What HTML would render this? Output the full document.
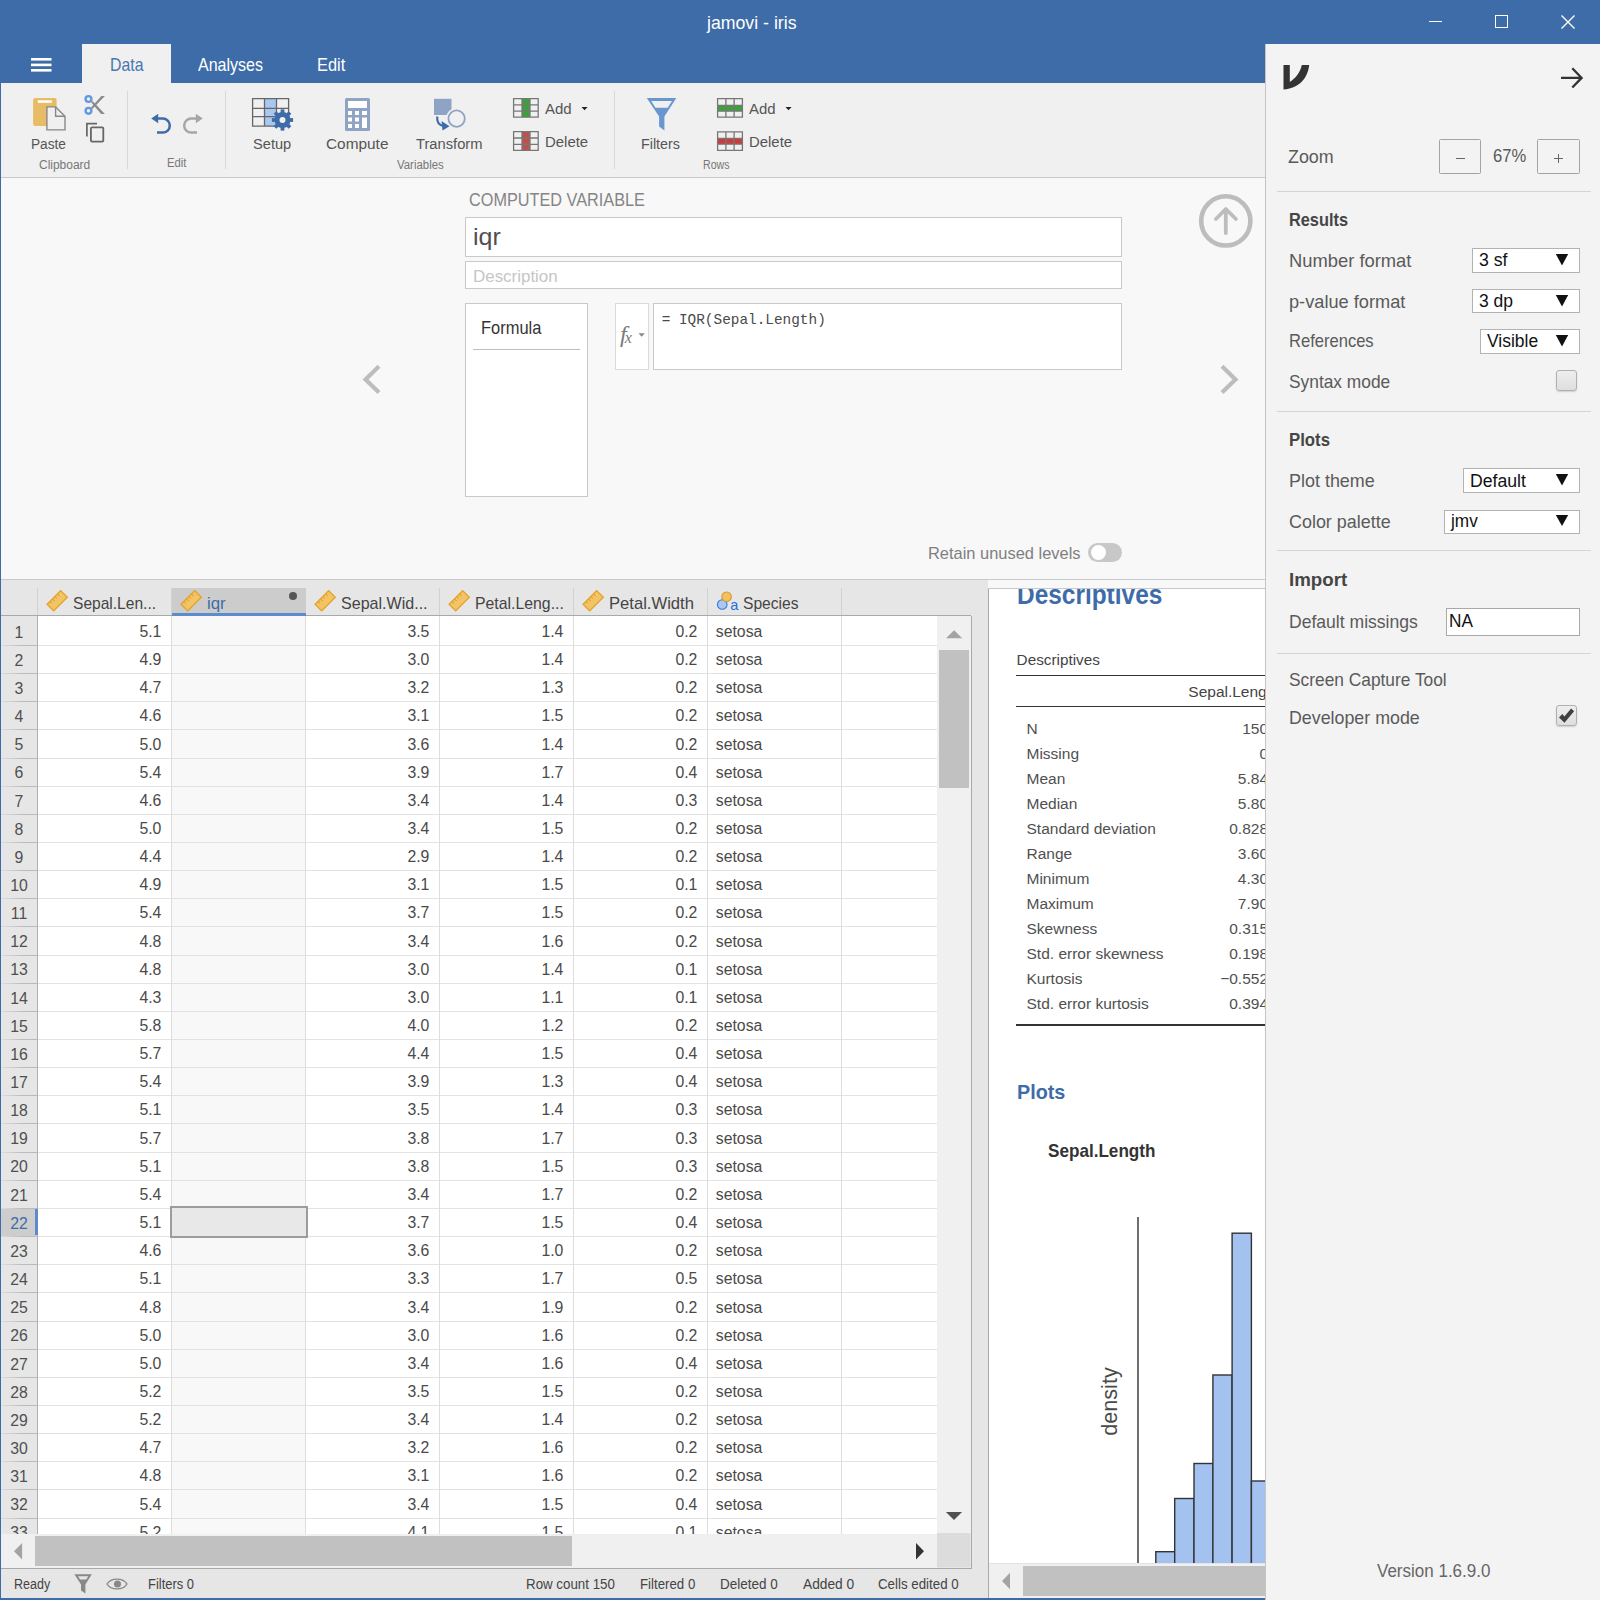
<!DOCTYPE html>
<html><head><meta charset="utf-8"><title>jamovi - iris</title>
<style>
html,body{margin:0;padding:0;width:1600px;height:1600px;overflow:hidden;background:#f8f8f8}
body{position:relative;font-family:"Liberation Sans",sans-serif}
.b{position:absolute}
.t{position:absolute;white-space:nowrap;line-height:1;font-family:"Liberation Sans",sans-serif}
svg.b{overflow:visible}
</style></head><body>
<div class="b" style="left:0px;top:0px;width:1600px;height:44px;background:#3e6ca8;"></div>
<div class="t" style="left:707.44px;top:14.02px;font-size:18.17px;color:#ffffff;font-family:'Liberation Sans', sans-serif;transform:scaleX(0.9749);transform-origin:0 0;">jamovi - iris</div>
<div class="b" style="left:1429px;top:21px;width:13px;height:1px;background:#ffffff;"></div>
<div class="b" style="left:1495px;top:15px;width:13px;height:13px;border:1.3px solid #fff;box-sizing:border-box;"></div>
<svg class="b" style="left:1560px;top:14px" width="16" height="16"><path d="M1.5 1.5L14.5 14.5M14.5 1.5L1.5 14.5" stroke="#fff" stroke-width="1.4"/></svg>
<div class="b" style="left:0px;top:44px;width:1265px;height:39px;background:#3e6ca8;"></div>
<svg class="b" style="left:31px;top:58px" width="21" height="15"><rect x="0" y="0" width="20.5" height="2.6" fill="#fff"/><rect x="0" y="5.6" width="20.5" height="2.6" fill="#fff"/><rect x="0" y="11" width="20.5" height="2.6" fill="#fff"/></svg>
<div class="b" style="left:82px;top:44px;width:89px;height:39px;background:#f0f0f0;"></div>
<div class="t" style="left:109.50px;top:55.92px;font-size:18.17px;color:#4a77b3;font-family:'Liberation Sans', sans-serif;transform:scaleX(0.8726);transform-origin:0 0;">Data</div>
<div class="t" style="left:197.50px;top:55.87px;font-size:18.17px;color:#ffffff;font-family:'Liberation Sans', sans-serif;transform:scaleX(0.8816);transform-origin:0 0;">Analyses</div>
<div class="t" style="left:316.75px;top:55.87px;font-size:18.17px;color:#ffffff;font-family:'Liberation Sans', sans-serif;transform:scaleX(0.9024);transform-origin:0 0;">Edit</div>
<div class="b" style="left:0px;top:44px;width:1px;height:1556px;background:#3e6ca8;"></div>
<div class="b" style="left:0px;top:1598px;width:1265px;height:2px;background:#3e6ca8;"></div>
<div class="b" style="left:1px;top:83px;width:1264px;height:94px;background:#f0f0f0;"></div>
<div class="b" style="left:1px;top:177px;width:1264px;height:1px;background:#c9c9c9;"></div>
<div class="b" style="left:127px;top:91px;width:1px;height:78px;background:#d8d8d8;"></div>
<div class="b" style="left:225px;top:91px;width:1px;height:78px;background:#d8d8d8;"></div>
<div class="b" style="left:614px;top:91px;width:1px;height:78px;background:#d8d8d8;"></div>
<div class="t" style="left:31.25px;top:135.98px;font-size:15.26px;color:#555;font-family:'Liberation Sans', sans-serif;transform:scaleX(0.8969);transform-origin:0 0;">Paste</div>
<div class="t" style="left:39.25px;top:159.30px;font-size:12.65px;color:#777;font-family:'Liberation Sans', sans-serif;transform:scaleX(0.9469);transform-origin:0 0;">Clipboard</div>
<div class="t" style="left:167.25px;top:157.30px;font-size:12.65px;color:#777;font-family:'Liberation Sans', sans-serif;transform:scaleX(0.8950);transform-origin:0 0;">Edit</div>
<div class="t" style="left:253.00px;top:135.98px;font-size:15.26px;color:#555;font-family:'Liberation Sans', sans-serif;transform:scaleX(0.9592);transform-origin:0 0;">Setup</div>
<div class="t" style="left:325.50px;top:135.98px;font-size:15.26px;color:#555;font-family:'Liberation Sans', sans-serif;transform:scaleX(1.0092);transform-origin:0 0;">Compute</div>
<div class="t" style="left:415.75px;top:135.98px;font-size:15.26px;color:#555;font-family:'Liberation Sans', sans-serif;transform:scaleX(0.9650);transform-origin:0 0;">Transform</div>
<div class="t" style="left:396.50px;top:159.20px;font-size:12.65px;color:#777;font-family:'Liberation Sans', sans-serif;transform:scaleX(0.9028);transform-origin:0 0;">Variables</div>
<div class="t" style="left:545.00px;top:100.98px;font-size:15.26px;color:#555;font-family:'Liberation Sans', sans-serif;transform:scaleX(0.9834);transform-origin:0 0;">Add</div>
<div class="t" style="left:545.00px;top:134.38px;font-size:15.26px;color:#555;font-family:'Liberation Sans', sans-serif;transform:scaleX(0.9791);transform-origin:0 0;">Delete</div>
<div class="t" style="left:641.30px;top:135.98px;font-size:15.26px;color:#555;font-family:'Liberation Sans', sans-serif;transform:scaleX(0.9388);transform-origin:0 0;">Filters</div>
<div class="t" style="left:703.20px;top:159.20px;font-size:12.65px;color:#777;font-family:'Liberation Sans', sans-serif;transform:scaleX(0.8411);transform-origin:0 0;">Rows</div>
<div class="t" style="left:749.40px;top:100.98px;font-size:15.26px;color:#555;font-family:'Liberation Sans', sans-serif;transform:scaleX(0.9797);transform-origin:0 0;">Add</div>
<div class="t" style="left:749.40px;top:134.38px;font-size:15.26px;color:#555;font-family:'Liberation Sans', sans-serif;transform:scaleX(0.9769);transform-origin:0 0;">Delete</div>
<svg class="b" style="left:30px;top:95px" width="40" height="40" viewBox="30 95 40 40"><rect x="33.1" y="98.1" width="23.5" height="27.8" rx="2" fill="#e8bb66"/><rect x="37.8" y="100.3" width="14.1" height="2.5" fill="#fff"/><path d="M46.9 106.9 H55.6 L65 116.3 V129.9 H46.9 Z" fill="#f0f0f0" stroke="#888" stroke-width="1.4"/><path d="M55.6 106.9 V116.3 H65" fill="none" stroke="#888" stroke-width="1.4"/></svg>
<svg class="b" style="left:82px;top:92px" width="28" height="24" viewBox="82 92 28 24"><circle cx="88.5" cy="99" r="2.9" fill="none" stroke="#6399e0" stroke-width="2.4"/><circle cx="88.5" cy="110.8" r="2.9" fill="none" stroke="#6399e0" stroke-width="2.4"/><path d="M91.1 107.4 L101.4 96 H104.9 L92.4 108.9 Z" fill="#8a8a8a"/><path d="M92.5 101.1 L104.9 113.9 H101.1 L91.3 102.5 Z" fill="#8a8a8a"/></svg>
<svg class="b" style="left:84px;top:120px" width="22" height="25" viewBox="84 120 22 25"><path d="M86.9 136.5 V123.6 H97" fill="none" stroke="#666" stroke-width="1.7"/><rect x="90.9" y="127.4" width="12.4" height="14.2" rx="1.2" fill="none" stroke="#666" stroke-width="1.8"/></svg>
<svg class="b" style="left:148px;top:110px" width="60" height="28" viewBox="148 110 60 28"><path d="M157 132.6 H162.8 A7 7 0 0 0 162.8 118.6 H156" fill="none" stroke="#3e6ca8" stroke-width="2.5"/><path d="M151.2 118.5 L158.2 113.8 V123.2 Z" fill="#3e6ca8"/><g transform="translate(354,0) scale(-1,1)"><path d="M157 132.6 H162.8 A7 7 0 0 0 162.8 118.6 H156" fill="none" stroke="#a6a6a6" stroke-width="2.5"/><path d="M151.2 118.5 L158.2 113.8 V123.2 Z" fill="#a6a6a6"/></g></svg>
<svg class="b" style="left:248px;top:94px" width="48" height="38" viewBox="248 94 48 38"><rect x="264.5" y="98.6" width="12" height="27.6" fill="#a8c8f0"/><path d="M252.6 98.6 H288.6 V126.2 H252.6 Z M264.5 98.6 V126.2 M276.5 98.6 V126.2 M252.6 108.4 H288.6 M252.6 116.6 H288.6" fill="none" stroke="#666" stroke-width="1.3"/><rect x="280.6" y="109.4" width="3.8" height="5" transform="rotate(0 282.5 120)" fill="#3e6ca8"/><rect x="280.6" y="109.4" width="3.8" height="5" transform="rotate(45 282.5 120)" fill="#3e6ca8"/><rect x="280.6" y="109.4" width="3.8" height="5" transform="rotate(90 282.5 120)" fill="#3e6ca8"/><rect x="280.6" y="109.4" width="3.8" height="5" transform="rotate(135 282.5 120)" fill="#3e6ca8"/><rect x="280.6" y="109.4" width="3.8" height="5" transform="rotate(180 282.5 120)" fill="#3e6ca8"/><rect x="280.6" y="109.4" width="3.8" height="5" transform="rotate(225 282.5 120)" fill="#3e6ca8"/><rect x="280.6" y="109.4" width="3.8" height="5" transform="rotate(270 282.5 120)" fill="#3e6ca8"/><rect x="280.6" y="109.4" width="3.8" height="5" transform="rotate(315 282.5 120)" fill="#3e6ca8"/><circle cx="282.5" cy="120" r="8" fill="#3e6ca8"/><circle cx="282.5" cy="120" r="3" fill="#f0f0f0"/></svg>
<svg class="b" style="left:343px;top:96px" width="30" height="38" viewBox="343 96 30 38"><rect x="345" y="98" width="25" height="33" rx="1.5" fill="#8fa3c4"/><rect x="348" y="101" width="19" height="7" fill="#fff"/><path d="M348 111h4v4h-4zM355 111h4v4h-4zM362 111h5v4h-5zM348 117.5h4v4h-4zM355 117.5h4v4h-4zM362 117.5h5v10.5h-5zM348 124h4v4h-4zM355 124h4v4h-4z" fill="#fff"/></svg>
<svg class="b" style="left:430px;top:96px" width="38" height="38" viewBox="430 96 38 38"><rect x="434" y="98.8" width="17.5" height="16.2" fill="#8fa3c4"/><circle cx="456.6" cy="118.6" r="10.6" fill="#f0f0f0"/><circle cx="456.6" cy="118.6" r="8.2" fill="none" stroke="#8fa3c4" stroke-width="1.8"/><path d="M437.3 116.5 C436.5 122 439 125.5 444 126" fill="none" stroke="#3e6ca8" stroke-width="2.2"/><path d="M449.5 126.2 L441.5 121 L442.5 130.5 Z" fill="#3e6ca8"/></svg>
<svg class="b" style="left:510px;top:95px" width="32" height="60" viewBox="510 95 32 60"><rect x="522" y="98.6" width="8" height="18.5" fill="#3ca03c"/><path d="M513.6 98.6H538.2V117.1H513.6ZM522 98.6V117.1M530 98.6V117.1M513.6 104.9H538.2M513.6 111.2H538.2" fill="none" stroke="#777" stroke-width="1.3"/><rect x="522" y="131.7" width="8" height="18.700000000000017" fill="#c0504d"/><path d="M513.6 131.7H538.2V150.4H513.6ZM522 131.7V150.4M530 131.7V150.4M513.6 138H538.2M513.6 144.3H538.2" fill="none" stroke="#777" stroke-width="1.3"/></svg>
<svg class="b" style="left:580px;top:105px" width="9" height="7"><path d="M1.5 2 H7.6 L4.55 5.2 Z" fill="#222"/></svg>
<svg class="b" style="left:644px;top:95px" width="36" height="38" viewBox="644 95 36 38"><path d="M646.8 98 H676.3 L664.4 116.6 V130.6 L659.1 126.5 V116.6 Z" fill="#6a96d0"/><path d="M651.2 100.9 H672 L667.7 107.7 H655.5 Z" fill="#f0f0f0"/></svg>
<svg class="b" style="left:714px;top:95px" width="32" height="60" viewBox="714 95 32 60"><rect x="717.6" y="105.4" width="24.799999999999955" height="5.699999999999989" fill="#3ca03c"/><path d="M717.6 98.6H742.4V117.2H717.6ZM725.9 98.6V117.2M734.1 98.6V117.2M717.6 105.4H742.4M717.6 111.1H742.4" fill="none" stroke="#777" stroke-width="1.3"/><rect x="717.6" y="138.4" width="24.799999999999955" height="5.699999999999989" fill="#d03a3a"/><path d="M717.6 131.8H742.4V150.4H717.6ZM725.9 131.8V150.4M734.1 131.8V150.4M717.6 138.4H742.4M717.6 144.1H742.4" fill="none" stroke="#777" stroke-width="1.3"/></svg>
<svg class="b" style="left:784px;top:105px" width="9" height="7"><path d="M1.5 2 H7.6 L4.55 5.2 Z" fill="#222"/></svg>
<div class="b" style="left:1px;top:178px;width:1264px;height:401px;background:#f8f8f8;"></div>
<div class="b" style="left:1px;top:579px;width:1264px;height:1px;background:#c8c8c8;"></div>
<div class="t" style="left:468.50px;top:190.51px;font-size:18.90px;color:#858585;font-family:'Liberation Sans', sans-serif;transform:scaleX(0.8611);transform-origin:0 0;">COMPUTED VARIABLE</div>
<div class="b" style="left:465px;top:217px;width:657px;height:40px;background:#fff;border:1px solid #c9c9c9;box-sizing:border-box;"></div>
<div class="t" style="left:472.50px;top:225.08px;font-size:24.13px;color:#505050;font-family:'Liberation Sans', sans-serif;transform:scaleX(1.0352);transform-origin:0 0;">iqr</div>
<div class="b" style="left:465px;top:261px;width:657px;height:28px;background:#fff;border:1px solid #c9c9c9;box-sizing:border-box;"></div>
<div class="t" style="left:472.50px;top:267.76px;font-size:17.30px;color:#c6c6c6;font-family:'Liberation Sans', sans-serif;transform:scaleX(0.9796);transform-origin:0 0;">Description</div>
<div class="b" style="left:465px;top:303px;width:123px;height:194px;background:#fff;border:1px solid #c9c9c9;box-sizing:border-box;"></div>
<div class="t" style="left:480.60px;top:319.61px;font-size:17.59px;color:#333;font-family:'Liberation Sans', sans-serif;transform:scaleX(0.9363);transform-origin:0 0;">Formula</div>
<div class="b" style="left:473px;top:349px;width:107px;height:1px;background:#bdbdbd;"></div>
<div class="b" style="left:615px;top:303px;width:34px;height:67px;background:#fff;border:1px solid #dadada;box-sizing:border-box;"></div>
<div class="t" style="left:620px;top:322px;font-size:24px;font-style:italic;font-family:'Liberation Serif',serif;color:#7a7a7a">f<span style="font-size:16px;position:relative;left:-2px;top:1px">x</span></div>
<svg class="b" style="left:637px;top:332px" width="9" height="6"><path d="M1.5 1.3H7.8L4.65 4.7Z" fill="#888"/></svg>
<div class="b" style="left:653px;top:303px;width:469px;height:67px;background:#fff;border:1px solid #c9c9c9;box-sizing:border-box;"></div>
<div class="t" style="left:661.70px;top:312.61px;font-size:14.40px;color:#4a4a4a;font-family:'Liberation Mono', monospace;">= IQR(Sepal.Length)</div>
<svg class="b" style="left:1195px;top:190px" width="62" height="62"><circle cx="30.8" cy="30.9" r="24.6" fill="none" stroke="#bdbdbd" stroke-width="4.6"/><path d="M30.8 43 V19.5 M20.9 29 L30.8 19 L40.9 29" fill="none" stroke="#bdbdbd" stroke-width="3.8" stroke-linecap="round" stroke-linejoin="round"/></svg>
<svg class="b" style="left:355px;top:360px" width="30" height="40"><path d="M24 6.3 L10.5 19.4 L24 32.5" fill="none" stroke="#bdbdbd" stroke-width="4.2"/></svg>
<svg class="b" style="left:1215px;top:360px" width="30" height="40"><path d="M7 6.3 L20.5 19.4 L7 32.5" fill="none" stroke="#bdbdbd" stroke-width="4.2"/></svg>
<div class="t" style="left:928.40px;top:544.80px;font-size:17.01px;color:#808080;font-family:'Liberation Sans', sans-serif;transform:scaleX(0.9665);transform-origin:0 0;">Retain unused levels</div>
<div class="b" style="left:1088px;top:543px;width:34px;height:19px;border-radius:9.5px;background:#c8c8c8"></div>
<div class="b" style="left:1090.5px;top:545px;width:15px;height:15px;border-radius:50%;background:#fff"></div>
<div class="b" style="left:1px;top:580px;width:987px;height:1018px;background:#e6e6e6;"></div>
<div class="b" style="left:0;top:0;width:1600px;height:1534px;overflow:hidden;clip-path:inset(616px 0 0 0)"><div class="b" style="left:38px;top:616px;width:899px;height:918px;background:#ffffff;"></div>
<div class="b" style="left:172px;top:616px;width:133px;height:918px;background:#f8f8f8;"></div>
<div class="b" style="left:38px;top:644.90px;width:899px;height:1px;background:#e3e3e3"></div>
<div class="b" style="left:1px;top:644.90px;width:36px;height:1px;background:linear-gradient(to right,#dedede,#bdbdbd 55%,#b9b9b9)"></div>
<div class="b" style="left:38px;top:673.05px;width:899px;height:1px;background:#e3e3e3"></div>
<div class="b" style="left:1px;top:673.05px;width:36px;height:1px;background:linear-gradient(to right,#dedede,#bdbdbd 55%,#b9b9b9)"></div>
<div class="b" style="left:38px;top:701.20px;width:899px;height:1px;background:#e3e3e3"></div>
<div class="b" style="left:1px;top:701.20px;width:36px;height:1px;background:linear-gradient(to right,#dedede,#bdbdbd 55%,#b9b9b9)"></div>
<div class="b" style="left:38px;top:729.35px;width:899px;height:1px;background:#e3e3e3"></div>
<div class="b" style="left:1px;top:729.35px;width:36px;height:1px;background:linear-gradient(to right,#dedede,#bdbdbd 55%,#b9b9b9)"></div>
<div class="b" style="left:38px;top:757.50px;width:899px;height:1px;background:#e3e3e3"></div>
<div class="b" style="left:1px;top:757.50px;width:36px;height:1px;background:linear-gradient(to right,#dedede,#bdbdbd 55%,#b9b9b9)"></div>
<div class="b" style="left:38px;top:785.65px;width:899px;height:1px;background:#e3e3e3"></div>
<div class="b" style="left:1px;top:785.65px;width:36px;height:1px;background:linear-gradient(to right,#dedede,#bdbdbd 55%,#b9b9b9)"></div>
<div class="b" style="left:38px;top:813.80px;width:899px;height:1px;background:#e3e3e3"></div>
<div class="b" style="left:1px;top:813.80px;width:36px;height:1px;background:linear-gradient(to right,#dedede,#bdbdbd 55%,#b9b9b9)"></div>
<div class="b" style="left:38px;top:841.95px;width:899px;height:1px;background:#e3e3e3"></div>
<div class="b" style="left:1px;top:841.95px;width:36px;height:1px;background:linear-gradient(to right,#dedede,#bdbdbd 55%,#b9b9b9)"></div>
<div class="b" style="left:38px;top:870.10px;width:899px;height:1px;background:#e3e3e3"></div>
<div class="b" style="left:1px;top:870.10px;width:36px;height:1px;background:linear-gradient(to right,#dedede,#bdbdbd 55%,#b9b9b9)"></div>
<div class="b" style="left:38px;top:898.25px;width:899px;height:1px;background:#e3e3e3"></div>
<div class="b" style="left:1px;top:898.25px;width:36px;height:1px;background:linear-gradient(to right,#dedede,#bdbdbd 55%,#b9b9b9)"></div>
<div class="b" style="left:38px;top:926.40px;width:899px;height:1px;background:#e3e3e3"></div>
<div class="b" style="left:1px;top:926.40px;width:36px;height:1px;background:linear-gradient(to right,#dedede,#bdbdbd 55%,#b9b9b9)"></div>
<div class="b" style="left:38px;top:954.55px;width:899px;height:1px;background:#e3e3e3"></div>
<div class="b" style="left:1px;top:954.55px;width:36px;height:1px;background:linear-gradient(to right,#dedede,#bdbdbd 55%,#b9b9b9)"></div>
<div class="b" style="left:38px;top:982.70px;width:899px;height:1px;background:#e3e3e3"></div>
<div class="b" style="left:1px;top:982.70px;width:36px;height:1px;background:linear-gradient(to right,#dedede,#bdbdbd 55%,#b9b9b9)"></div>
<div class="b" style="left:38px;top:1010.85px;width:899px;height:1px;background:#e3e3e3"></div>
<div class="b" style="left:1px;top:1010.85px;width:36px;height:1px;background:linear-gradient(to right,#dedede,#bdbdbd 55%,#b9b9b9)"></div>
<div class="b" style="left:38px;top:1039.00px;width:899px;height:1px;background:#e3e3e3"></div>
<div class="b" style="left:1px;top:1039.00px;width:36px;height:1px;background:linear-gradient(to right,#dedede,#bdbdbd 55%,#b9b9b9)"></div>
<div class="b" style="left:38px;top:1067.15px;width:899px;height:1px;background:#e3e3e3"></div>
<div class="b" style="left:1px;top:1067.15px;width:36px;height:1px;background:linear-gradient(to right,#dedede,#bdbdbd 55%,#b9b9b9)"></div>
<div class="b" style="left:38px;top:1095.30px;width:899px;height:1px;background:#e3e3e3"></div>
<div class="b" style="left:1px;top:1095.30px;width:36px;height:1px;background:linear-gradient(to right,#dedede,#bdbdbd 55%,#b9b9b9)"></div>
<div class="b" style="left:38px;top:1123.45px;width:899px;height:1px;background:#e3e3e3"></div>
<div class="b" style="left:1px;top:1123.45px;width:36px;height:1px;background:linear-gradient(to right,#dedede,#bdbdbd 55%,#b9b9b9)"></div>
<div class="b" style="left:38px;top:1151.60px;width:899px;height:1px;background:#e3e3e3"></div>
<div class="b" style="left:1px;top:1151.60px;width:36px;height:1px;background:linear-gradient(to right,#dedede,#bdbdbd 55%,#b9b9b9)"></div>
<div class="b" style="left:38px;top:1179.75px;width:899px;height:1px;background:#e3e3e3"></div>
<div class="b" style="left:1px;top:1179.75px;width:36px;height:1px;background:linear-gradient(to right,#dedede,#bdbdbd 55%,#b9b9b9)"></div>
<div class="b" style="left:38px;top:1207.90px;width:899px;height:1px;background:#e3e3e3"></div>
<div class="b" style="left:1px;top:1207.90px;width:36px;height:1px;background:linear-gradient(to right,#dedede,#bdbdbd 55%,#b9b9b9)"></div>
<div class="b" style="left:38px;top:1236.05px;width:899px;height:1px;background:#e3e3e3"></div>
<div class="b" style="left:1px;top:1236.05px;width:36px;height:1px;background:linear-gradient(to right,#dedede,#bdbdbd 55%,#b9b9b9)"></div>
<div class="b" style="left:38px;top:1264.20px;width:899px;height:1px;background:#e3e3e3"></div>
<div class="b" style="left:1px;top:1264.20px;width:36px;height:1px;background:linear-gradient(to right,#dedede,#bdbdbd 55%,#b9b9b9)"></div>
<div class="b" style="left:38px;top:1292.35px;width:899px;height:1px;background:#e3e3e3"></div>
<div class="b" style="left:1px;top:1292.35px;width:36px;height:1px;background:linear-gradient(to right,#dedede,#bdbdbd 55%,#b9b9b9)"></div>
<div class="b" style="left:38px;top:1320.50px;width:899px;height:1px;background:#e3e3e3"></div>
<div class="b" style="left:1px;top:1320.50px;width:36px;height:1px;background:linear-gradient(to right,#dedede,#bdbdbd 55%,#b9b9b9)"></div>
<div class="b" style="left:38px;top:1348.65px;width:899px;height:1px;background:#e3e3e3"></div>
<div class="b" style="left:1px;top:1348.65px;width:36px;height:1px;background:linear-gradient(to right,#dedede,#bdbdbd 55%,#b9b9b9)"></div>
<div class="b" style="left:38px;top:1376.80px;width:899px;height:1px;background:#e3e3e3"></div>
<div class="b" style="left:1px;top:1376.80px;width:36px;height:1px;background:linear-gradient(to right,#dedede,#bdbdbd 55%,#b9b9b9)"></div>
<div class="b" style="left:38px;top:1404.95px;width:899px;height:1px;background:#e3e3e3"></div>
<div class="b" style="left:1px;top:1404.95px;width:36px;height:1px;background:linear-gradient(to right,#dedede,#bdbdbd 55%,#b9b9b9)"></div>
<div class="b" style="left:38px;top:1433.10px;width:899px;height:1px;background:#e3e3e3"></div>
<div class="b" style="left:1px;top:1433.10px;width:36px;height:1px;background:linear-gradient(to right,#dedede,#bdbdbd 55%,#b9b9b9)"></div>
<div class="b" style="left:38px;top:1461.25px;width:899px;height:1px;background:#e3e3e3"></div>
<div class="b" style="left:1px;top:1461.25px;width:36px;height:1px;background:linear-gradient(to right,#dedede,#bdbdbd 55%,#b9b9b9)"></div>
<div class="b" style="left:38px;top:1489.40px;width:899px;height:1px;background:#e3e3e3"></div>
<div class="b" style="left:1px;top:1489.40px;width:36px;height:1px;background:linear-gradient(to right,#dedede,#bdbdbd 55%,#b9b9b9)"></div>
<div class="b" style="left:38px;top:1517.55px;width:899px;height:1px;background:#e3e3e3"></div>
<div class="b" style="left:1px;top:1517.55px;width:36px;height:1px;background:linear-gradient(to right,#dedede,#bdbdbd 55%,#b9b9b9)"></div>
<div class="b" style="left:171.0px;top:616px;width:1px;height:918px;background:#dedede"></div>
<div class="b" style="left:305.0px;top:616px;width:1px;height:918px;background:#dedede"></div>
<div class="b" style="left:439.0px;top:616px;width:1px;height:918px;background:#dedede"></div>
<div class="b" style="left:573.0px;top:616px;width:1px;height:918px;background:#dedede"></div>
<div class="b" style="left:707.0px;top:616px;width:1px;height:918px;background:#dedede"></div>
<div class="b" style="left:841.0px;top:616px;width:1px;height:918px;background:#dedede"></div>
<div class="b" style="left:37px;top:588px;width:1px;height:946px;background:#b0b0b0;"></div>
<div class="b" style="left:1px;top:1208.90px;width:36px;height:27.15px;background:#cdcdcd"></div>
<div class="b" style="left:35px;top:1208.90px;width:3px;height:26.15px;background:#5b8ccc"></div>
<div class="b" style="left:170px;top:1205.5px;width:137.5px;height:32px;box-sizing:border-box;border:2px solid #9c9c9c;background:#e8e8e8"></div>
<div class="t" style="left:1px;width:36px;text-align:center;top:624.63px;font-size:15.8px;color:#505050">1</div>
<div class="t" style="right:1438.60px;top:623.93px;font-size:15.80px;color:#4a4a4a;">5.1</div>
<div class="t" style="right:1170.60px;top:623.93px;font-size:15.80px;color:#4a4a4a;">3.5</div>
<div class="t" style="right:1036.60px;top:623.93px;font-size:15.80px;color:#4a4a4a;">1.4</div>
<div class="t" style="right:902.60px;top:623.93px;font-size:15.80px;color:#4a4a4a;">0.2</div>
<div class="t" style="left:715.80px;top:623.93px;font-size:15.80px;color:#4a4a4a;">setosa</div>
<div class="t" style="left:1px;width:36px;text-align:center;top:652.78px;font-size:15.8px;color:#505050">2</div>
<div class="t" style="right:1438.60px;top:652.08px;font-size:15.80px;color:#4a4a4a;">4.9</div>
<div class="t" style="right:1170.60px;top:652.08px;font-size:15.80px;color:#4a4a4a;">3.0</div>
<div class="t" style="right:1036.60px;top:652.08px;font-size:15.80px;color:#4a4a4a;">1.4</div>
<div class="t" style="right:902.60px;top:652.08px;font-size:15.80px;color:#4a4a4a;">0.2</div>
<div class="t" style="left:715.80px;top:652.08px;font-size:15.80px;color:#4a4a4a;">setosa</div>
<div class="t" style="left:1px;width:36px;text-align:center;top:680.93px;font-size:15.8px;color:#505050">3</div>
<div class="t" style="right:1438.60px;top:680.23px;font-size:15.80px;color:#4a4a4a;">4.7</div>
<div class="t" style="right:1170.60px;top:680.23px;font-size:15.80px;color:#4a4a4a;">3.2</div>
<div class="t" style="right:1036.60px;top:680.23px;font-size:15.80px;color:#4a4a4a;">1.3</div>
<div class="t" style="right:902.60px;top:680.23px;font-size:15.80px;color:#4a4a4a;">0.2</div>
<div class="t" style="left:715.80px;top:680.23px;font-size:15.80px;color:#4a4a4a;">setosa</div>
<div class="t" style="left:1px;width:36px;text-align:center;top:709.08px;font-size:15.8px;color:#505050">4</div>
<div class="t" style="right:1438.60px;top:708.38px;font-size:15.80px;color:#4a4a4a;">4.6</div>
<div class="t" style="right:1170.60px;top:708.38px;font-size:15.80px;color:#4a4a4a;">3.1</div>
<div class="t" style="right:1036.60px;top:708.38px;font-size:15.80px;color:#4a4a4a;">1.5</div>
<div class="t" style="right:902.60px;top:708.38px;font-size:15.80px;color:#4a4a4a;">0.2</div>
<div class="t" style="left:715.80px;top:708.38px;font-size:15.80px;color:#4a4a4a;">setosa</div>
<div class="t" style="left:1px;width:36px;text-align:center;top:737.23px;font-size:15.8px;color:#505050">5</div>
<div class="t" style="right:1438.60px;top:736.53px;font-size:15.80px;color:#4a4a4a;">5.0</div>
<div class="t" style="right:1170.60px;top:736.53px;font-size:15.80px;color:#4a4a4a;">3.6</div>
<div class="t" style="right:1036.60px;top:736.53px;font-size:15.80px;color:#4a4a4a;">1.4</div>
<div class="t" style="right:902.60px;top:736.53px;font-size:15.80px;color:#4a4a4a;">0.2</div>
<div class="t" style="left:715.80px;top:736.53px;font-size:15.80px;color:#4a4a4a;">setosa</div>
<div class="t" style="left:1px;width:36px;text-align:center;top:765.38px;font-size:15.8px;color:#505050">6</div>
<div class="t" style="right:1438.60px;top:764.68px;font-size:15.80px;color:#4a4a4a;">5.4</div>
<div class="t" style="right:1170.60px;top:764.68px;font-size:15.80px;color:#4a4a4a;">3.9</div>
<div class="t" style="right:1036.60px;top:764.68px;font-size:15.80px;color:#4a4a4a;">1.7</div>
<div class="t" style="right:902.60px;top:764.68px;font-size:15.80px;color:#4a4a4a;">0.4</div>
<div class="t" style="left:715.80px;top:764.68px;font-size:15.80px;color:#4a4a4a;">setosa</div>
<div class="t" style="left:1px;width:36px;text-align:center;top:793.53px;font-size:15.8px;color:#505050">7</div>
<div class="t" style="right:1438.60px;top:792.83px;font-size:15.80px;color:#4a4a4a;">4.6</div>
<div class="t" style="right:1170.60px;top:792.83px;font-size:15.80px;color:#4a4a4a;">3.4</div>
<div class="t" style="right:1036.60px;top:792.83px;font-size:15.80px;color:#4a4a4a;">1.4</div>
<div class="t" style="right:902.60px;top:792.83px;font-size:15.80px;color:#4a4a4a;">0.3</div>
<div class="t" style="left:715.80px;top:792.83px;font-size:15.80px;color:#4a4a4a;">setosa</div>
<div class="t" style="left:1px;width:36px;text-align:center;top:821.68px;font-size:15.8px;color:#505050">8</div>
<div class="t" style="right:1438.60px;top:820.98px;font-size:15.80px;color:#4a4a4a;">5.0</div>
<div class="t" style="right:1170.60px;top:820.98px;font-size:15.80px;color:#4a4a4a;">3.4</div>
<div class="t" style="right:1036.60px;top:820.98px;font-size:15.80px;color:#4a4a4a;">1.5</div>
<div class="t" style="right:902.60px;top:820.98px;font-size:15.80px;color:#4a4a4a;">0.2</div>
<div class="t" style="left:715.80px;top:820.98px;font-size:15.80px;color:#4a4a4a;">setosa</div>
<div class="t" style="left:1px;width:36px;text-align:center;top:849.83px;font-size:15.8px;color:#505050">9</div>
<div class="t" style="right:1438.60px;top:849.13px;font-size:15.80px;color:#4a4a4a;">4.4</div>
<div class="t" style="right:1170.60px;top:849.13px;font-size:15.80px;color:#4a4a4a;">2.9</div>
<div class="t" style="right:1036.60px;top:849.13px;font-size:15.80px;color:#4a4a4a;">1.4</div>
<div class="t" style="right:902.60px;top:849.13px;font-size:15.80px;color:#4a4a4a;">0.2</div>
<div class="t" style="left:715.80px;top:849.13px;font-size:15.80px;color:#4a4a4a;">setosa</div>
<div class="t" style="left:1px;width:36px;text-align:center;top:877.98px;font-size:15.8px;color:#505050">10</div>
<div class="t" style="right:1438.60px;top:877.28px;font-size:15.80px;color:#4a4a4a;">4.9</div>
<div class="t" style="right:1170.60px;top:877.28px;font-size:15.80px;color:#4a4a4a;">3.1</div>
<div class="t" style="right:1036.60px;top:877.28px;font-size:15.80px;color:#4a4a4a;">1.5</div>
<div class="t" style="right:902.60px;top:877.28px;font-size:15.80px;color:#4a4a4a;">0.1</div>
<div class="t" style="left:715.80px;top:877.28px;font-size:15.80px;color:#4a4a4a;">setosa</div>
<div class="t" style="left:1px;width:36px;text-align:center;top:906.13px;font-size:15.8px;color:#505050">11</div>
<div class="t" style="right:1438.60px;top:905.43px;font-size:15.80px;color:#4a4a4a;">5.4</div>
<div class="t" style="right:1170.60px;top:905.43px;font-size:15.80px;color:#4a4a4a;">3.7</div>
<div class="t" style="right:1036.60px;top:905.43px;font-size:15.80px;color:#4a4a4a;">1.5</div>
<div class="t" style="right:902.60px;top:905.43px;font-size:15.80px;color:#4a4a4a;">0.2</div>
<div class="t" style="left:715.80px;top:905.43px;font-size:15.80px;color:#4a4a4a;">setosa</div>
<div class="t" style="left:1px;width:36px;text-align:center;top:934.28px;font-size:15.8px;color:#505050">12</div>
<div class="t" style="right:1438.60px;top:933.58px;font-size:15.80px;color:#4a4a4a;">4.8</div>
<div class="t" style="right:1170.60px;top:933.58px;font-size:15.80px;color:#4a4a4a;">3.4</div>
<div class="t" style="right:1036.60px;top:933.58px;font-size:15.80px;color:#4a4a4a;">1.6</div>
<div class="t" style="right:902.60px;top:933.58px;font-size:15.80px;color:#4a4a4a;">0.2</div>
<div class="t" style="left:715.80px;top:933.58px;font-size:15.80px;color:#4a4a4a;">setosa</div>
<div class="t" style="left:1px;width:36px;text-align:center;top:962.43px;font-size:15.8px;color:#505050">13</div>
<div class="t" style="right:1438.60px;top:961.73px;font-size:15.80px;color:#4a4a4a;">4.8</div>
<div class="t" style="right:1170.60px;top:961.73px;font-size:15.80px;color:#4a4a4a;">3.0</div>
<div class="t" style="right:1036.60px;top:961.73px;font-size:15.80px;color:#4a4a4a;">1.4</div>
<div class="t" style="right:902.60px;top:961.73px;font-size:15.80px;color:#4a4a4a;">0.1</div>
<div class="t" style="left:715.80px;top:961.73px;font-size:15.80px;color:#4a4a4a;">setosa</div>
<div class="t" style="left:1px;width:36px;text-align:center;top:990.58px;font-size:15.8px;color:#505050">14</div>
<div class="t" style="right:1438.60px;top:989.88px;font-size:15.80px;color:#4a4a4a;">4.3</div>
<div class="t" style="right:1170.60px;top:989.88px;font-size:15.80px;color:#4a4a4a;">3.0</div>
<div class="t" style="right:1036.60px;top:989.88px;font-size:15.80px;color:#4a4a4a;">1.1</div>
<div class="t" style="right:902.60px;top:989.88px;font-size:15.80px;color:#4a4a4a;">0.1</div>
<div class="t" style="left:715.80px;top:989.88px;font-size:15.80px;color:#4a4a4a;">setosa</div>
<div class="t" style="left:1px;width:36px;text-align:center;top:1018.73px;font-size:15.8px;color:#505050">15</div>
<div class="t" style="right:1438.60px;top:1018.03px;font-size:15.80px;color:#4a4a4a;">5.8</div>
<div class="t" style="right:1170.60px;top:1018.03px;font-size:15.80px;color:#4a4a4a;">4.0</div>
<div class="t" style="right:1036.60px;top:1018.03px;font-size:15.80px;color:#4a4a4a;">1.2</div>
<div class="t" style="right:902.60px;top:1018.03px;font-size:15.80px;color:#4a4a4a;">0.2</div>
<div class="t" style="left:715.80px;top:1018.03px;font-size:15.80px;color:#4a4a4a;">setosa</div>
<div class="t" style="left:1px;width:36px;text-align:center;top:1046.88px;font-size:15.8px;color:#505050">16</div>
<div class="t" style="right:1438.60px;top:1046.18px;font-size:15.80px;color:#4a4a4a;">5.7</div>
<div class="t" style="right:1170.60px;top:1046.18px;font-size:15.80px;color:#4a4a4a;">4.4</div>
<div class="t" style="right:1036.60px;top:1046.18px;font-size:15.80px;color:#4a4a4a;">1.5</div>
<div class="t" style="right:902.60px;top:1046.18px;font-size:15.80px;color:#4a4a4a;">0.4</div>
<div class="t" style="left:715.80px;top:1046.18px;font-size:15.80px;color:#4a4a4a;">setosa</div>
<div class="t" style="left:1px;width:36px;text-align:center;top:1075.03px;font-size:15.8px;color:#505050">17</div>
<div class="t" style="right:1438.60px;top:1074.33px;font-size:15.80px;color:#4a4a4a;">5.4</div>
<div class="t" style="right:1170.60px;top:1074.33px;font-size:15.80px;color:#4a4a4a;">3.9</div>
<div class="t" style="right:1036.60px;top:1074.33px;font-size:15.80px;color:#4a4a4a;">1.3</div>
<div class="t" style="right:902.60px;top:1074.33px;font-size:15.80px;color:#4a4a4a;">0.4</div>
<div class="t" style="left:715.80px;top:1074.33px;font-size:15.80px;color:#4a4a4a;">setosa</div>
<div class="t" style="left:1px;width:36px;text-align:center;top:1103.18px;font-size:15.8px;color:#505050">18</div>
<div class="t" style="right:1438.60px;top:1102.48px;font-size:15.80px;color:#4a4a4a;">5.1</div>
<div class="t" style="right:1170.60px;top:1102.48px;font-size:15.80px;color:#4a4a4a;">3.5</div>
<div class="t" style="right:1036.60px;top:1102.48px;font-size:15.80px;color:#4a4a4a;">1.4</div>
<div class="t" style="right:902.60px;top:1102.48px;font-size:15.80px;color:#4a4a4a;">0.3</div>
<div class="t" style="left:715.80px;top:1102.48px;font-size:15.80px;color:#4a4a4a;">setosa</div>
<div class="t" style="left:1px;width:36px;text-align:center;top:1131.33px;font-size:15.8px;color:#505050">19</div>
<div class="t" style="right:1438.60px;top:1130.63px;font-size:15.80px;color:#4a4a4a;">5.7</div>
<div class="t" style="right:1170.60px;top:1130.63px;font-size:15.80px;color:#4a4a4a;">3.8</div>
<div class="t" style="right:1036.60px;top:1130.63px;font-size:15.80px;color:#4a4a4a;">1.7</div>
<div class="t" style="right:902.60px;top:1130.63px;font-size:15.80px;color:#4a4a4a;">0.3</div>
<div class="t" style="left:715.80px;top:1130.63px;font-size:15.80px;color:#4a4a4a;">setosa</div>
<div class="t" style="left:1px;width:36px;text-align:center;top:1159.48px;font-size:15.8px;color:#505050">20</div>
<div class="t" style="right:1438.60px;top:1158.78px;font-size:15.80px;color:#4a4a4a;">5.1</div>
<div class="t" style="right:1170.60px;top:1158.78px;font-size:15.80px;color:#4a4a4a;">3.8</div>
<div class="t" style="right:1036.60px;top:1158.78px;font-size:15.80px;color:#4a4a4a;">1.5</div>
<div class="t" style="right:902.60px;top:1158.78px;font-size:15.80px;color:#4a4a4a;">0.3</div>
<div class="t" style="left:715.80px;top:1158.78px;font-size:15.80px;color:#4a4a4a;">setosa</div>
<div class="t" style="left:1px;width:36px;text-align:center;top:1187.63px;font-size:15.8px;color:#505050">21</div>
<div class="t" style="right:1438.60px;top:1186.93px;font-size:15.80px;color:#4a4a4a;">5.4</div>
<div class="t" style="right:1170.60px;top:1186.93px;font-size:15.80px;color:#4a4a4a;">3.4</div>
<div class="t" style="right:1036.60px;top:1186.93px;font-size:15.80px;color:#4a4a4a;">1.7</div>
<div class="t" style="right:902.60px;top:1186.93px;font-size:15.80px;color:#4a4a4a;">0.2</div>
<div class="t" style="left:715.80px;top:1186.93px;font-size:15.80px;color:#4a4a4a;">setosa</div>
<div class="t" style="left:1px;width:36px;text-align:center;top:1215.78px;font-size:15.8px;color:#3e6ca8">22</div>
<div class="t" style="right:1438.60px;top:1215.08px;font-size:15.80px;color:#4a4a4a;">5.1</div>
<div class="t" style="right:1170.60px;top:1215.08px;font-size:15.80px;color:#4a4a4a;">3.7</div>
<div class="t" style="right:1036.60px;top:1215.08px;font-size:15.80px;color:#4a4a4a;">1.5</div>
<div class="t" style="right:902.60px;top:1215.08px;font-size:15.80px;color:#4a4a4a;">0.4</div>
<div class="t" style="left:715.80px;top:1215.08px;font-size:15.80px;color:#4a4a4a;">setosa</div>
<div class="t" style="left:1px;width:36px;text-align:center;top:1243.93px;font-size:15.8px;color:#505050">23</div>
<div class="t" style="right:1438.60px;top:1243.23px;font-size:15.80px;color:#4a4a4a;">4.6</div>
<div class="t" style="right:1170.60px;top:1243.23px;font-size:15.80px;color:#4a4a4a;">3.6</div>
<div class="t" style="right:1036.60px;top:1243.23px;font-size:15.80px;color:#4a4a4a;">1.0</div>
<div class="t" style="right:902.60px;top:1243.23px;font-size:15.80px;color:#4a4a4a;">0.2</div>
<div class="t" style="left:715.80px;top:1243.23px;font-size:15.80px;color:#4a4a4a;">setosa</div>
<div class="t" style="left:1px;width:36px;text-align:center;top:1272.08px;font-size:15.8px;color:#505050">24</div>
<div class="t" style="right:1438.60px;top:1271.38px;font-size:15.80px;color:#4a4a4a;">5.1</div>
<div class="t" style="right:1170.60px;top:1271.38px;font-size:15.80px;color:#4a4a4a;">3.3</div>
<div class="t" style="right:1036.60px;top:1271.38px;font-size:15.80px;color:#4a4a4a;">1.7</div>
<div class="t" style="right:902.60px;top:1271.38px;font-size:15.80px;color:#4a4a4a;">0.5</div>
<div class="t" style="left:715.80px;top:1271.38px;font-size:15.80px;color:#4a4a4a;">setosa</div>
<div class="t" style="left:1px;width:36px;text-align:center;top:1300.23px;font-size:15.8px;color:#505050">25</div>
<div class="t" style="right:1438.60px;top:1299.53px;font-size:15.80px;color:#4a4a4a;">4.8</div>
<div class="t" style="right:1170.60px;top:1299.53px;font-size:15.80px;color:#4a4a4a;">3.4</div>
<div class="t" style="right:1036.60px;top:1299.53px;font-size:15.80px;color:#4a4a4a;">1.9</div>
<div class="t" style="right:902.60px;top:1299.53px;font-size:15.80px;color:#4a4a4a;">0.2</div>
<div class="t" style="left:715.80px;top:1299.53px;font-size:15.80px;color:#4a4a4a;">setosa</div>
<div class="t" style="left:1px;width:36px;text-align:center;top:1328.38px;font-size:15.8px;color:#505050">26</div>
<div class="t" style="right:1438.60px;top:1327.68px;font-size:15.80px;color:#4a4a4a;">5.0</div>
<div class="t" style="right:1170.60px;top:1327.68px;font-size:15.80px;color:#4a4a4a;">3.0</div>
<div class="t" style="right:1036.60px;top:1327.68px;font-size:15.80px;color:#4a4a4a;">1.6</div>
<div class="t" style="right:902.60px;top:1327.68px;font-size:15.80px;color:#4a4a4a;">0.2</div>
<div class="t" style="left:715.80px;top:1327.68px;font-size:15.80px;color:#4a4a4a;">setosa</div>
<div class="t" style="left:1px;width:36px;text-align:center;top:1356.53px;font-size:15.8px;color:#505050">27</div>
<div class="t" style="right:1438.60px;top:1355.83px;font-size:15.80px;color:#4a4a4a;">5.0</div>
<div class="t" style="right:1170.60px;top:1355.83px;font-size:15.80px;color:#4a4a4a;">3.4</div>
<div class="t" style="right:1036.60px;top:1355.83px;font-size:15.80px;color:#4a4a4a;">1.6</div>
<div class="t" style="right:902.60px;top:1355.83px;font-size:15.80px;color:#4a4a4a;">0.4</div>
<div class="t" style="left:715.80px;top:1355.83px;font-size:15.80px;color:#4a4a4a;">setosa</div>
<div class="t" style="left:1px;width:36px;text-align:center;top:1384.68px;font-size:15.8px;color:#505050">28</div>
<div class="t" style="right:1438.60px;top:1383.98px;font-size:15.80px;color:#4a4a4a;">5.2</div>
<div class="t" style="right:1170.60px;top:1383.98px;font-size:15.80px;color:#4a4a4a;">3.5</div>
<div class="t" style="right:1036.60px;top:1383.98px;font-size:15.80px;color:#4a4a4a;">1.5</div>
<div class="t" style="right:902.60px;top:1383.98px;font-size:15.80px;color:#4a4a4a;">0.2</div>
<div class="t" style="left:715.80px;top:1383.98px;font-size:15.80px;color:#4a4a4a;">setosa</div>
<div class="t" style="left:1px;width:36px;text-align:center;top:1412.83px;font-size:15.8px;color:#505050">29</div>
<div class="t" style="right:1438.60px;top:1412.13px;font-size:15.80px;color:#4a4a4a;">5.2</div>
<div class="t" style="right:1170.60px;top:1412.13px;font-size:15.80px;color:#4a4a4a;">3.4</div>
<div class="t" style="right:1036.60px;top:1412.13px;font-size:15.80px;color:#4a4a4a;">1.4</div>
<div class="t" style="right:902.60px;top:1412.13px;font-size:15.80px;color:#4a4a4a;">0.2</div>
<div class="t" style="left:715.80px;top:1412.13px;font-size:15.80px;color:#4a4a4a;">setosa</div>
<div class="t" style="left:1px;width:36px;text-align:center;top:1440.98px;font-size:15.8px;color:#505050">30</div>
<div class="t" style="right:1438.60px;top:1440.28px;font-size:15.80px;color:#4a4a4a;">4.7</div>
<div class="t" style="right:1170.60px;top:1440.28px;font-size:15.80px;color:#4a4a4a;">3.2</div>
<div class="t" style="right:1036.60px;top:1440.28px;font-size:15.80px;color:#4a4a4a;">1.6</div>
<div class="t" style="right:902.60px;top:1440.28px;font-size:15.80px;color:#4a4a4a;">0.2</div>
<div class="t" style="left:715.80px;top:1440.28px;font-size:15.80px;color:#4a4a4a;">setosa</div>
<div class="t" style="left:1px;width:36px;text-align:center;top:1469.13px;font-size:15.8px;color:#505050">31</div>
<div class="t" style="right:1438.60px;top:1468.43px;font-size:15.80px;color:#4a4a4a;">4.8</div>
<div class="t" style="right:1170.60px;top:1468.43px;font-size:15.80px;color:#4a4a4a;">3.1</div>
<div class="t" style="right:1036.60px;top:1468.43px;font-size:15.80px;color:#4a4a4a;">1.6</div>
<div class="t" style="right:902.60px;top:1468.43px;font-size:15.80px;color:#4a4a4a;">0.2</div>
<div class="t" style="left:715.80px;top:1468.43px;font-size:15.80px;color:#4a4a4a;">setosa</div>
<div class="t" style="left:1px;width:36px;text-align:center;top:1497.28px;font-size:15.8px;color:#505050">32</div>
<div class="t" style="right:1438.60px;top:1496.58px;font-size:15.80px;color:#4a4a4a;">5.4</div>
<div class="t" style="right:1170.60px;top:1496.58px;font-size:15.80px;color:#4a4a4a;">3.4</div>
<div class="t" style="right:1036.60px;top:1496.58px;font-size:15.80px;color:#4a4a4a;">1.5</div>
<div class="t" style="right:902.60px;top:1496.58px;font-size:15.80px;color:#4a4a4a;">0.4</div>
<div class="t" style="left:715.80px;top:1496.58px;font-size:15.80px;color:#4a4a4a;">setosa</div>
<div class="t" style="left:1px;width:36px;text-align:center;top:1525.43px;font-size:15.8px;color:#505050">33</div>
<div class="t" style="right:1438.60px;top:1524.73px;font-size:15.80px;color:#4a4a4a;">5.2</div>
<div class="t" style="right:1170.60px;top:1524.73px;font-size:15.80px;color:#4a4a4a;">4.1</div>
<div class="t" style="right:1036.60px;top:1524.73px;font-size:15.80px;color:#4a4a4a;">1.5</div>
<div class="t" style="right:902.60px;top:1524.73px;font-size:15.80px;color:#4a4a4a;">0.1</div>
<div class="t" style="left:715.80px;top:1524.73px;font-size:15.80px;color:#4a4a4a;">setosa</div></div>
<div class="b" style="left:1px;top:615px;width:970px;height:1px;background:#a9a9a9;"></div>
<div class="b" style="left:37.0px;top:588px;width:1px;height:27px;background:#d2d2d2"></div>
<div class="b" style="left:171.0px;top:588px;width:1px;height:27px;background:#d2d2d2"></div>
<div class="b" style="left:305.0px;top:588px;width:1px;height:27px;background:#d2d2d2"></div>
<div class="b" style="left:439.0px;top:588px;width:1px;height:27px;background:#d2d2d2"></div>
<div class="b" style="left:573.0px;top:588px;width:1px;height:27px;background:#d2d2d2"></div>
<div class="b" style="left:707.0px;top:588px;width:1px;height:27px;background:#d2d2d2"></div>
<div class="b" style="left:841.0px;top:588px;width:1px;height:27px;background:#d2d2d2"></div>
<div class="b" style="left:172px;top:588px;width:133.5px;height:25px;background:#cccccc;"></div>
<div class="b" style="left:172px;top:613px;width:133.5px;height:2.5px;background:#5b8ccc;"></div>
<svg class="b" style="left:45.9px;top:588px" width="24" height="26"><g transform="translate(11.2,12.8) rotate(-45)"><rect x="-9.6" y="-4.7" width="19.2" height="9.4" fill="#f2c466" stroke="#e3a228" stroke-width="1.3"/><path d="M-5.5 -4.7V-2M-2 -4.7V-1.5M1.5 -4.7V-2M5 -4.7V-1.5" stroke="#e3a228" stroke-width="1"/></g></svg>
<svg class="b" style="left:179.6px;top:588px" width="24" height="26"><g transform="translate(11.2,12.8) rotate(-45)"><rect x="-9.6" y="-4.7" width="19.2" height="9.4" fill="#f2c466" stroke="#e3a228" stroke-width="1.3"/><path d="M-5.5 -4.7V-2M-2 -4.7V-1.5M1.5 -4.7V-2M5 -4.7V-1.5" stroke="#e3a228" stroke-width="1"/></g></svg>
<svg class="b" style="left:313.7px;top:588px" width="24" height="26"><g transform="translate(11.2,12.8) rotate(-45)"><rect x="-9.6" y="-4.7" width="19.2" height="9.4" fill="#f2c466" stroke="#e3a228" stroke-width="1.3"/><path d="M-5.5 -4.7V-2M-2 -4.7V-1.5M1.5 -4.7V-2M5 -4.7V-1.5" stroke="#e3a228" stroke-width="1"/></g></svg>
<svg class="b" style="left:447.8px;top:588px" width="24" height="26"><g transform="translate(11.2,12.8) rotate(-45)"><rect x="-9.6" y="-4.7" width="19.2" height="9.4" fill="#f2c466" stroke="#e3a228" stroke-width="1.3"/><path d="M-5.5 -4.7V-2M-2 -4.7V-1.5M1.5 -4.7V-2M5 -4.7V-1.5" stroke="#e3a228" stroke-width="1"/></g></svg>
<svg class="b" style="left:581.8px;top:588px" width="24" height="26"><g transform="translate(11.2,12.8) rotate(-45)"><rect x="-9.6" y="-4.7" width="19.2" height="9.4" fill="#f2c466" stroke="#e3a228" stroke-width="1.3"/><path d="M-5.5 -4.7V-2M-2 -4.7V-1.5M1.5 -4.7V-2M5 -4.7V-1.5" stroke="#e3a228" stroke-width="1"/></g></svg>
<div class="t" style="left:72.50px;top:595.28px;font-size:17.15px;color:#444;font-family:'Liberation Sans', sans-serif;transform:scaleX(0.9078);transform-origin:0 0;">Sepal.Len...</div>
<div class="t" style="left:206.90px;top:595.28px;font-size:17.15px;color:#3e6ca8;font-family:'Liberation Sans', sans-serif;transform:scaleX(0.9814);transform-origin:0 0;">iqr</div>
<div class="t" style="left:340.60px;top:595.28px;font-size:17.15px;color:#444;font-family:'Liberation Sans', sans-serif;transform:scaleX(0.9366);transform-origin:0 0;">Sepal.Wid...</div>
<div class="t" style="left:474.50px;top:595.28px;font-size:17.15px;color:#444;font-family:'Liberation Sans', sans-serif;transform:scaleX(0.9231);transform-origin:0 0;">Petal.Leng...</div>
<div class="t" style="left:608.75px;top:595.28px;font-size:17.15px;color:#444;font-family:'Liberation Sans', sans-serif;transform:scaleX(0.9693);transform-origin:0 0;">Petal.Width</div>
<div class="t" style="left:742.80px;top:595.28px;font-size:17.15px;color:#444;font-family:'Liberation Sans', sans-serif;transform:scaleX(0.9111);transform-origin:0 0;">Species</div>
<svg class="b" style="left:714px;top:588px" width="26" height="26"><circle cx="8.25" cy="16.5" r="4.8" fill="#abc8f0" stroke="#2f7be6" stroke-width="1.1"/><circle cx="12.6" cy="8.8" r="4.75" fill="#f0c264" stroke="#d89a22" stroke-width="1.1"/></svg>
<div class="t" style="left:730.20px;top:597.93px;font-size:14.50px;color:#1f6fe0;">a</div>
<div class="b" style="left:289px;top:592px;width:8px;height:8px;border-radius:50%;background:#555"></div>
<div class="b" style="left:937px;top:616px;width:34px;height:918px;background:#f0f0f0;"></div>
<div class="b" style="left:939px;top:650px;width:30px;height:138px;background:#c1c1c1;"></div>
<svg class="b" style="left:940px;top:624px" width="28" height="20"><path d="M6 14.2H22.2L14.1 6.2Z" fill="#a3a3a3"/></svg>
<svg class="b" style="left:940px;top:1506px" width="28" height="20"><path d="M5.9 5.9H22.1L14 14.1Z" fill="#505050"/></svg>
<div class="b" style="left:1px;top:1534px;width:936px;height:34px;background:#f0f0f0;"></div>
<div class="b" style="left:35px;top:1536px;width:537px;height:30px;background:#c1c1c1;"></div>
<svg class="b" style="left:8px;top:1540px" width="20" height="24"><path d="M14.1 3H14.1V19.6L6 11.3Z" fill="#a3a3a3"/></svg>
<svg class="b" style="left:910px;top:1540px" width="20" height="24"><path d="M6 3V19.6L14 11.3Z" fill="#333"/></svg>
<div class="b" style="left:937px;top:1533px;width:33px;height:34px;background:#dcdcdc;"></div>
<div class="b" style="left:971px;top:616px;width:1px;height:953px;background:#a9a9a9;"></div>
<div class="b" style="left:1px;top:1568px;width:971px;height:1px;background:#a9a9a9;"></div>
<div class="t" style="left:13.75px;top:1577.44px;font-size:14.24px;color:#444;font-family:'Liberation Sans', sans-serif;transform:scaleX(0.8803);transform-origin:0 0;">Ready</div>
<svg class="b" style="left:72px;top:1572px" width="22" height="24"><path d="M2.4 2.3H19.8L13.4 12.5V21.6L9 18.6V12.5Z" fill="#888"/><path d="M6 4.3H16.3L14.2 7.6H8.1Z" fill="#e6e6e6"/></svg>
<svg class="b" style="left:105px;top:1576px" width="24" height="16"><path d="M2 8 C6 1.5 18 1.5 22 8 C18 14.5 6 14.5 2 8Z" fill="none" stroke="#888" stroke-width="1.4"/><circle cx="12.5" cy="8" r="3.5" fill="#888"/></svg>
<div class="t" style="left:147.80px;top:1577.44px;font-size:14.24px;color:#444;font-family:'Liberation Sans', sans-serif;transform:scaleX(0.9072);transform-origin:0 0;">Filters 0</div>
<div class="t" style="left:526.00px;top:1577.44px;font-size:14.24px;color:#444;font-family:'Liberation Sans', sans-serif;transform:scaleX(0.9366);transform-origin:0 0;">Row count 150</div>
<div class="t" style="left:640.00px;top:1577.44px;font-size:14.24px;color:#444;font-family:'Liberation Sans', sans-serif;transform:scaleX(0.9315);transform-origin:0 0;">Filtered 0</div>
<div class="t" style="left:720.30px;top:1577.44px;font-size:14.24px;color:#444;font-family:'Liberation Sans', sans-serif;transform:scaleX(0.9462);transform-origin:0 0;">Deleted 0</div>
<div class="t" style="left:802.50px;top:1577.44px;font-size:14.24px;color:#444;font-family:'Liberation Sans', sans-serif;transform:scaleX(0.9656);transform-origin:0 0;">Added 0</div>
<div class="t" style="left:878.00px;top:1577.44px;font-size:14.24px;color:#444;font-family:'Liberation Sans', sans-serif;transform:scaleX(0.9356);transform-origin:0 0;">Cells edited 0</div>
<div class="b" style="left:988px;top:588px;width:277px;height:1010px;overflow:hidden"><div class="b" style="left:-988px;top:-588px;width:1600px;height:1600px"><div class="b" style="left:988px;top:588px;width:277px;height:1010px;background:#ffffff;"></div>
<div class="t" style="left:1016.60px;top:581.34px;font-size:27.36px;color:#3e6ca8;font-weight:700;font-family:'Liberation Sans', sans-serif;transform:scaleX(0.8929);transform-origin:0 0;">Descriptives</div>
<div class="t" style="left:1016.60px;top:652.34px;font-size:15.31px;color:#444;font-family:'Liberation Sans', sans-serif;">Descriptives</div>
<div class="b" style="left:1016px;top:674.5px;width:249px;height:1.0px;background:#333;"></div>
<div class="t" style="left:1188.30px;top:683.88px;font-size:15.50px;color:#444;">Sepal.Length</div>
<div class="b" style="left:1016px;top:705.5px;width:249px;height:1.0px;background:#333;"></div>
<div class="t" style="left:1026.50px;top:721.38px;font-size:15.50px;color:#505050;">N</div>
<div class="t" style="right:331.99px;top:721.38px;font-size:15.50px;color:#505050;">150</div>
<div class="t" style="left:1026.50px;top:746.30px;font-size:15.50px;color:#505050;">Missing</div>
<div class="t" style="right:332.00px;top:746.30px;font-size:15.50px;color:#505050;">0</div>
<div class="t" style="left:1026.50px;top:771.22px;font-size:15.50px;color:#505050;">Mean</div>
<div class="t" style="right:332.00px;top:771.22px;font-size:15.50px;color:#505050;">5.84</div>
<div class="t" style="left:1026.50px;top:796.14px;font-size:15.50px;color:#505050;">Median</div>
<div class="t" style="right:332.00px;top:796.14px;font-size:15.50px;color:#505050;">5.80</div>
<div class="t" style="left:1026.50px;top:821.06px;font-size:15.50px;color:#505050;">Standard deviation</div>
<div class="t" style="right:331.99px;top:821.06px;font-size:15.50px;color:#505050;">0.828</div>
<div class="t" style="left:1026.50px;top:845.98px;font-size:15.50px;color:#505050;">Range</div>
<div class="t" style="right:332.00px;top:845.98px;font-size:15.50px;color:#505050;">3.60</div>
<div class="t" style="left:1026.50px;top:870.90px;font-size:15.50px;color:#505050;">Minimum</div>
<div class="t" style="right:332.00px;top:870.90px;font-size:15.50px;color:#505050;">4.30</div>
<div class="t" style="left:1026.50px;top:895.82px;font-size:15.50px;color:#505050;">Maximum</div>
<div class="t" style="right:332.00px;top:895.82px;font-size:15.50px;color:#505050;">7.90</div>
<div class="t" style="left:1026.50px;top:920.74px;font-size:15.50px;color:#505050;">Skewness</div>
<div class="t" style="right:331.99px;top:920.74px;font-size:15.50px;color:#505050;">0.315</div>
<div class="t" style="left:1026.50px;top:945.66px;font-size:15.50px;color:#505050;">Std. error skewness</div>
<div class="t" style="right:331.99px;top:945.66px;font-size:15.50px;color:#505050;">0.198</div>
<div class="t" style="left:1026.50px;top:970.58px;font-size:15.50px;color:#505050;">Kurtosis</div>
<div class="t" style="right:331.99px;top:970.58px;font-size:15.50px;color:#505050;">−0.552</div>
<div class="t" style="left:1026.50px;top:995.50px;font-size:15.50px;color:#505050;">Std. error kurtosis</div>
<div class="t" style="right:331.99px;top:995.50px;font-size:15.50px;color:#505050;">0.394</div>
<div class="b" style="left:1016px;top:1023.5px;width:249px;height:2.0px;background:#333;"></div>
<div class="t" style="left:1016.50px;top:1081.26px;font-size:21.08px;color:#3e6ca8;font-weight:700;font-family:'Liberation Sans', sans-serif;transform:scaleX(0.9373);transform-origin:0 0;">Plots</div>
<div class="t" style="left:1048.00px;top:1142.42px;font-size:18.17px;color:#333;font-weight:700;font-family:'Liberation Sans', sans-serif;transform:scaleX(0.9425);transform-origin:0 0;">Sepal.Length</div>
<div class="b" style="left:1137.3px;top:1217px;width:1.6000000000001364px;height:346px;background:#6e6e6e;"></div>
<div class="t" style="left:1059px;top:1391px;width:100px;text-align:center;font-size:21.6px;color:#4a4a4a;transform:rotate(-90deg);transform-origin:50px 10.5px">density</div>
<svg class="b" style="left:988px;top:1200px" width="277" height="380" viewBox="988 1200 277 380"><rect x="1155.8" y="1551.7" width="18.9" height="28.3" fill="#a4c2f0" stroke="#333" stroke-width="1.4"/><rect x="1174.7" y="1498.5" width="19.3" height="81.5" fill="#a4c2f0" stroke="#333" stroke-width="1.4"/><rect x="1194.0" y="1463.5" width="18.9" height="116.5" fill="#a4c2f0" stroke="#333" stroke-width="1.4"/><rect x="1212.9" y="1375.0" width="19.2" height="205.0" fill="#a4c2f0" stroke="#333" stroke-width="1.4"/><rect x="1232.1" y="1233.2" width="19.3" height="346.8" fill="#a4c2f0" stroke="#333" stroke-width="1.4"/><rect x="1251.4" y="1481.0" width="19.2" height="99.0" fill="#a4c2f0" stroke="#333" stroke-width="1.4"/></svg>
<div class="b" style="left:988px;top:1563px;width:277px;height:35px;background:#f0f0f0;"></div>
<div class="b" style="left:988px;top:1563px;width:277px;height:1px;background:#e3e3e3;"></div>
<div class="b" style="left:1023px;top:1566px;width:242px;height:30px;background:#c1c1c1;"></div>
<svg class="b" style="left:996px;top:1568px" width="20" height="26"><path d="M14 4.8V21.3L6 13Z" fill="#a3a3a3"/></svg></div></div>
<div class="b" style="left:988px;top:588px;width:1px;height:1010px;background:#a9a9a9;"></div>
<div class="b" style="left:988px;top:588px;width:277px;height:1px;background:#c8c8c8;"></div>
<div class="b" style="left:1265px;top:44px;width:335px;height:1556px;background:#f3f3f3;"></div>
<div class="b" style="left:1265px;top:44px;width:1px;height:1556px;background:#c4c4c4;"></div>
<svg class="b" style="left:1280px;top:60px" width="34" height="34" viewBox="1280 60 34 34"><path d="M1283.5 65 H1289.8 V82 C1295.5 78.5 1300.5 72 1301.8 65 H1309.2 C1307.8 79 1298 88.5 1283.5 89.5 Z" fill="#333"/></svg>
<svg class="b" style="left:1556px;top:62px" width="30" height="30" viewBox="1556 62 30 30"><path d="M1561 77.9 H1581 M1572.3 68.3 L1581.6 77.9 L1572.3 87.5" fill="none" stroke="#333" stroke-width="2.3"/></svg>
<div class="t" style="left:1288.30px;top:147.55px;font-size:18.60px;color:#5a5a5a;font-family:'Liberation Sans', sans-serif;transform:scaleX(0.9610);transform-origin:0 0;">Zoom</div>
<div class="b" style="left:1439px;top:139px;width:42px;height:34.5px;border:1px solid #a3a3a3;box-sizing:border-box;border-radius:1.5px;"></div>
<div class="b" style="left:1537px;top:139px;width:43px;height:34.5px;border:1px solid #a3a3a3;box-sizing:border-box;border-radius:1.5px;"></div>
<div class="b" style="left:1455.5px;top:157.6px;width:9.0px;height:1.0999999999999943px;background:#666;"></div>
<div class="b" style="left:1553.5px;top:157.6px;width:9.0px;height:1.0999999999999943px;background:#666;"></div>
<div class="b" style="left:1557.5px;top:153.6px;width:1.099999999999909px;height:9.0px;background:#666;"></div>
<div class="t" style="left:1492.50px;top:147.25px;font-size:18.60px;color:#5a5a5a;font-family:'Liberation Sans', sans-serif;transform:scaleX(0.8931);transform-origin:0 0;">67%</div>
<div class="b" style="left:1277px;top:191.0px;width:314px;height:1px;background:#d4d4d4"></div>
<div class="b" style="left:1277px;top:410.8px;width:314px;height:1px;background:#d4d4d4"></div>
<div class="b" style="left:1277px;top:550.0px;width:314px;height:1px;background:#d4d4d4"></div>
<div class="b" style="left:1277px;top:652.5px;width:314px;height:1px;background:#d4d4d4"></div>
<div class="t" style="left:1288.50px;top:211.12px;font-size:18.17px;color:#454545;font-weight:700;font-family:'Liberation Sans', sans-serif;transform:scaleX(0.8990);transform-origin:0 0;">Results</div>
<div class="t" style="left:1288.50px;top:252.25px;font-size:18.60px;color:#5a5a5a;font-family:'Liberation Sans', sans-serif;transform:scaleX(0.9873);transform-origin:0 0;">Number format</div>
<div class="t" style="left:1288.50px;top:292.75px;font-size:18.60px;color:#5a5a5a;font-family:'Liberation Sans', sans-serif;transform:scaleX(0.9788);transform-origin:0 0;">p-value format</div>
<div class="t" style="left:1288.50px;top:332.25px;font-size:18.60px;color:#5a5a5a;font-family:'Liberation Sans', sans-serif;transform:scaleX(0.8902);transform-origin:0 0;">References</div>
<div class="t" style="left:1288.50px;top:373.25px;font-size:18.60px;color:#5a5a5a;font-family:'Liberation Sans', sans-serif;transform:scaleX(0.9330);transform-origin:0 0;">Syntax mode</div>
<div class="t" style="left:1288.50px;top:431.02px;font-size:18.17px;color:#454545;font-weight:700;font-family:'Liberation Sans', sans-serif;transform:scaleX(0.9230);transform-origin:0 0;">Plots</div>
<div class="t" style="left:1288.50px;top:472.05px;font-size:18.60px;color:#5a5a5a;font-family:'Liberation Sans', sans-serif;transform:scaleX(0.9648);transform-origin:0 0;">Plot theme</div>
<div class="t" style="left:1288.50px;top:513.25px;font-size:18.60px;color:#5a5a5a;font-family:'Liberation Sans', sans-serif;transform:scaleX(0.9641);transform-origin:0 0;">Color palette</div>
<div class="t" style="left:1288.50px;top:571.22px;font-size:18.17px;color:#454545;font-weight:700;font-family:'Liberation Sans', sans-serif;transform:scaleX(1.0297);transform-origin:0 0;">Import</div>
<div class="t" style="left:1288.50px;top:612.75px;font-size:18.60px;color:#5a5a5a;font-family:'Liberation Sans', sans-serif;transform:scaleX(0.9444);transform-origin:0 0;">Default missings</div>
<div class="t" style="left:1288.50px;top:670.95px;font-size:18.60px;color:#5a5a5a;font-family:'Liberation Sans', sans-serif;transform:scaleX(0.9323);transform-origin:0 0;">Screen Capture Tool</div>
<div class="t" style="left:1288.50px;top:708.65px;font-size:18.60px;color:#5a5a5a;font-family:'Liberation Sans', sans-serif;transform:scaleX(0.9582);transform-origin:0 0;">Developer mode</div>
<div class="t" style="left:1377.40px;top:1561.26px;font-size:19.19px;color:#666;font-family:'Liberation Sans', sans-serif;transform:scaleX(0.8860);transform-origin:0 0;">Version 1.6.9.0</div>
<div class="b" style="left:1472.3px;top:248.3px;width:107.70000000000005px;height:24.30000000000001px;background:#ffffff;border:1px solid #b3b3b3;box-sizing:border-box;"></div><div class="t" style="left:1479.00px;top:250.83px;font-size:18.75px;color:#111;font-family:'Liberation Sans', sans-serif;transform:scaleX(0.9418);transform-origin:0 0;">3 sf</div><svg class="b" style="left:1554px;top:252.9px" width="16" height="13.5"><path d="M1.8 1 H14.2 L8 12.5 Z" fill="#111"/></svg>
<div class="b" style="left:1472.3px;top:289.3px;width:107.70000000000005px;height:23.69999999999999px;background:#ffffff;border:1px solid #b3b3b3;box-sizing:border-box;"></div><div class="t" style="left:1479.00px;top:291.83px;font-size:18.75px;color:#111;font-family:'Liberation Sans', sans-serif;transform:scaleX(0.9318);transform-origin:0 0;">3 dp</div><svg class="b" style="left:1554px;top:293.7px" width="16" height="13.5"><path d="M1.8 1 H14.2 L8 12.5 Z" fill="#111"/></svg>
<div class="b" style="left:1480.2px;top:329px;width:99.79999999999995px;height:24.600000000000023px;background:#ffffff;border:1px solid #b3b3b3;box-sizing:border-box;"></div><div class="t" style="left:1487.00px;top:332.13px;font-size:18.75px;color:#111;font-family:'Liberation Sans', sans-serif;transform:scaleX(0.9326);transform-origin:0 0;">Visible</div><svg class="b" style="left:1554px;top:333.5px" width="16" height="13.5"><path d="M1.8 1 H14.2 L8 12.5 Z" fill="#111"/></svg>
<div class="b" style="left:1463.3px;top:468.4px;width:116.70000000000005px;height:24.600000000000023px;background:#ffffff;border:1px solid #b3b3b3;box-sizing:border-box;"></div><div class="t" style="left:1470.20px;top:471.83px;font-size:18.75px;color:#111;font-family:'Liberation Sans', sans-serif;transform:scaleX(0.9411);transform-origin:0 0;">Default</div><svg class="b" style="left:1554px;top:473.0px" width="16" height="13.6"><path d="M1.8 1 H14.2 L8 12.6 Z" fill="#111"/></svg>
<div class="b" style="left:1444.4px;top:509.7px;width:135.5999999999999px;height:24.30000000000001px;background:#ffffff;border:1px solid #b3b3b3;box-sizing:border-box;"></div><div class="t" style="left:1451.13px;top:511.83px;font-size:18.75px;color:#111;font-family:'Liberation Sans', sans-serif;transform:scaleX(0.9181);transform-origin:0 0;">jmv</div><svg class="b" style="left:1554px;top:514.3px" width="16" height="13.1"><path d="M1.8 1 H14.2 L8 12.1 Z" fill="#111"/></svg>
<div class="b" style="left:1446.3px;top:607.5px;width:133.70000000000005px;height:28.5px;background:#ffffff;border:1px solid #a9a9a9;box-sizing:border-box;"></div>
<div class="t" style="left:1448.80px;top:611.53px;font-size:18.75px;color:#111;font-family:'Liberation Sans', sans-serif;transform:scaleX(0.9177);transform-origin:0 0;">NA</div>
<div class="b" style="left:1556px;top:370.3px;width:21.4px;height:20.8px;box-shadow:0 1px 1.5px rgba(0,0,0,0.15);box-sizing:border-box;border:1px solid #b0b0b0;border-radius:3px;background:linear-gradient(#eeeeee,#dedede)"></div>
<div class="b" style="left:1556px;top:705px;width:21.4px;height:20.8px;box-shadow:0 1px 1.5px rgba(0,0,0,0.15);box-sizing:border-box;border:1px solid #b0b0b0;border-radius:3px;background:linear-gradient(#eeeeee,#dedede)"></div>
<svg class="b" style="left:1550px;top:700px" width="35" height="32" viewBox="1550 700 35 32"><path d="M1559 717.4 L1562.3 714 L1564.4 716.4 L1571.1 708.6 L1574.1 711.3 L1564.5 722.7 Z" fill="#404040"/></svg>
</body></html>
